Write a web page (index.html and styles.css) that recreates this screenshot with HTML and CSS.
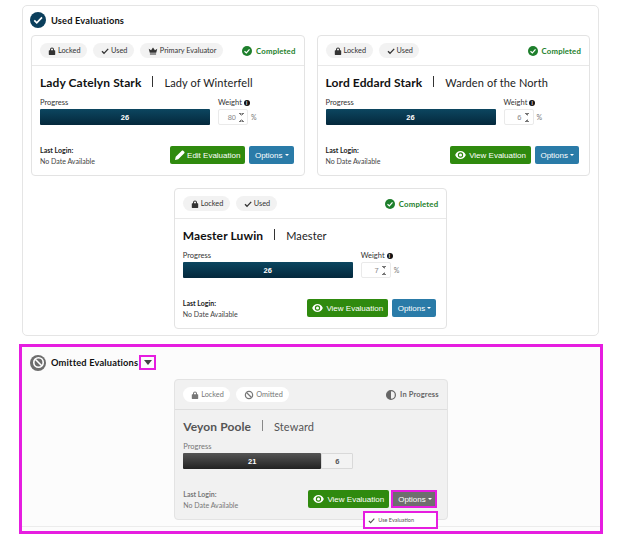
FILE: index.html
```html
<!DOCTYPE html>
<html lang="en">
<head>
<meta charset="utf-8">
<title>Evaluations</title>
<link rel="stylesheet" href="styles.css">
</head>
<body>
<svg class="defs" width="0" height="0" aria-hidden="true">
  <symbol id="lock" viewBox="0 0 12 12"><path d="M6 .6a3 3 0 0 0-3 3V5H2a.8.8 0 0 0-.8.8v5.4c0 .4.4.8.8.8h8c.4 0 .8-.4.8-.8V5.800A.8.8 0 0 0 10 5H9V3.600a3 3 0 0 0-3-3zM4.500 5V3.600a1.500 1.500 0 0 1 3 0V5z" fill-rule="evenodd"/></symbol>
  <symbol id="check" viewBox="0 0 12 12"><path d="M1.500 6.500 4.500 9.500 10.800 2.800" fill="none" stroke="currentColor" stroke-width="2"/></symbol>
  <symbol id="crown" viewBox="0 0 14 12"><path d="M2.500 8.500 1 3l3.300 2L7 1l2.700 4L13 3l-1.500 5.500zM2.700 9.500h8.600V11H2.700z"/></symbol>
  <symbol id="ok" viewBox="0 0 16 16"><circle cx="8" cy="8" r="8" fill="currentColor"/><path d="M4 8.300 7 11l5-5.500" fill="none" stroke="#fff" stroke-width="2"/></symbol>
  <symbol id="ban" viewBox="0 0 16 16"><circle cx="8" cy="8" r="5.800" fill="none" stroke="currentColor" stroke-width="2"/><path d="M4 4l8 8" stroke="currentColor" stroke-width="2"/></symbol>
  <symbol id="eye" viewBox="0 0 16 12"><path d="M8 0C4.500 0 1.600 2.300 0 6c1.600 3.700 4.500 6 8 6s6.400-2.300 8-6c-1.600-3.700-4.500-6-8-6zm0 10a4 4 0 1 1 0-8 4 4 0 0 1 0 8z" fill-rule="evenodd"/><circle cx="8" cy="6" r="2.300"/></symbol>
  <symbol id="pencil" viewBox="0 0 14 14"><path d="M0 14l1-4.500L9.500 1c.6-.6 1.500-.6 2 0L13 2.500c.6.6.6 1.400 0 2L4.500 13z"/></symbol>
</svg>

<section class="panel used">
  <header class="panel-head">
    <span class="round round-navy"><svg class="ico-10"><use href="#check"/></svg></span>
    <h2 class="panel-title">Used Evaluations</h2>
  </header>
  <div class="cards">
    <article class="card">
      <div class="card-head">
        <span class="pill"><svg class="ico-8"><use href="#lock"/></svg>Locked</span>
        <span class="pill"><svg class="ico-8"><use href="#check"/></svg>Used</span>
        <span class="pill"><svg class="ico-10"><use href="#crown"/></svg>Primary Evaluator</span>
        <span class="status done"><svg class="ico-10"><use href="#ok"/></svg>Completed</span>
      </div>
      <div class="card-body">
        <div class="who"><strong>Lady Catelyn Stark</strong><i class="sep"></i><span class="role">Lady of Winterfell</span></div>
        <div class="metrics">
          <div class="progress-col"><div class="label">Progress</div><div class="bar"><div class="fill">26</div></div></div>
          <div class="weight-col"><div class="label">Weight <b class="info">i</b></div><div class="weight"><span class="spin">80<em class="arrows"></em></span><small>%</small></div></div>
        </div>
        <div class="foot">
          <div class="login"><b>Last Login:</b><span>No Date Available</span></div>
          <div class="actions"><a class="btn green"><svg class="ico-10"><use href="#pencil"/></svg>Edit Evaluation</a><a class="btn blue">Options<i class="caret"></i></a></div>
        </div>
      </div>
    </article>
    <article class="card">
      <div class="card-head">
        <span class="pill"><svg class="ico-8"><use href="#lock"/></svg>Locked</span>
        <span class="pill"><svg class="ico-8"><use href="#check"/></svg>Used</span>
        <span class="status done"><svg class="ico-10"><use href="#ok"/></svg>Completed</span>
      </div>
      <div class="card-body">
        <div class="who"><strong>Lord Eddard Stark</strong><i class="sep"></i><span class="role">Warden of the North</span></div>
        <div class="metrics">
          <div class="progress-col"><div class="label">Progress</div><div class="bar"><div class="fill">26</div></div></div>
          <div class="weight-col"><div class="label">Weight <b class="info">i</b></div><div class="weight"><span class="spin">6<em class="arrows"></em></span><small>%</small></div></div>
        </div>
        <div class="foot">
          <div class="login"><b>Last Login:</b><span>No Date Available</span></div>
          <div class="actions"><a class="btn green"><svg class="ico-eye"><use href="#eye"/></svg>View Evaluation</a><a class="btn blue">Options<i class="caret"></i></a></div>
        </div>
      </div>
    </article>
    <article class="card">
      <div class="card-head">
        <span class="pill"><svg class="ico-8"><use href="#lock"/></svg>Locked</span>
        <span class="pill"><svg class="ico-8"><use href="#check"/></svg>Used</span>
        <span class="status done"><svg class="ico-10"><use href="#ok"/></svg>Completed</span>
      </div>
      <div class="card-body">
        <div class="who"><strong>Maester Luwin</strong><i class="sep"></i><span class="role">Maester</span></div>
        <div class="metrics">
          <div class="progress-col"><div class="label">Progress</div><div class="bar"><div class="fill">26</div></div></div>
          <div class="weight-col"><div class="label">Weight <b class="info">i</b></div><div class="weight"><span class="spin">7<em class="arrows"></em></span><small>%</small></div></div>
        </div>
        <div class="foot">
          <div class="login"><b>Last Login:</b><span>No Date Available</span></div>
          <div class="actions"><a class="btn green"><svg class="ico-eye"><use href="#eye"/></svg>View Evaluation</a><a class="btn blue">Options<i class="caret"></i></a></div>
        </div>
      </div>
    </article>
  </div>
</section>

<section class="omitted-mark">
  <div class="omitted">
    <header class="panel-head omitted-head">
      <span class="round round-grey"><svg class="ico-12"><use href="#ban"/></svg></span>
      <h2 class="panel-title">Omitted Evaluations</h2>
      <span class="toggle"><i class="toggle-arrow"></i></span>
    </header>
    <div class="cards">
      <article class="card card-omit">
        <div class="card-head">
          <span class="pill"><svg class="ico-8"><use href="#lock"/></svg>Locked</span>
          <span class="pill"><svg class="ico-10"><use href="#ban"/></svg>Omitted</span>
          <span class="status prog"><svg class="ico-10" viewBox="0 0 16 16"><circle cx="8" cy="8" r="7" fill="none" stroke="currentColor" stroke-width="2"/><path d="M8 1a7 7 0 0 0 0 14z" fill="currentColor"/></svg>In Progress</span>
        </div>
        <div class="card-body">
          <div class="who"><strong>Veyon Poole</strong><i class="sep"></i><span class="role">Steward</span></div>
          <div class="metrics">
            <div class="progress-col"><div class="label">Progress</div><div class="bar"><div class="fill grey">21</div><div class="rest">6</div></div></div>
          </div>
          <div class="foot">
            <div class="login"><b>Last Login:</b><span>No Date Available</span></div>
            <div class="actions"><a class="btn green"><svg class="ico-eye"><use href="#eye"/></svg>View Evaluation</a><a class="btn grey-btn">Options<i class="caret"></i></a></div>
          </div>
        </div>
        <div class="menu"><svg class="ico-7"><use href="#check"/></svg>Use Evaluation</div>
      </article>
    </div>
  </div>
</section>
</body>
</html>
```
FILE: styles.css
```css
* { box-sizing: border-box; }
html, body { margin: 0; padding: 0; }
body {
  width: 624px;
  height: 540px;
  overflow: hidden;
  background: #fff;
  font-family: "Lato", "Liberation Sans", sans-serif;
  color: #111;
  padding-top: 5px;
}
.defs { position: absolute; }
svg { fill: currentColor; flex: none; }
.ico-7 { width: 7px; height: 7px; }
.ico-8 { width: 8px; height: 8px; }
.ico-10 { width: 10px; height: 10px; }
.ico-12 { width: 13px; height: 13px; }
.ico-eye { width: 11px; height: 8px; margin-right: 1px; }

.panel {
  width: 577px;
  height: 331px;
  margin-left: 22px;
  border: 1px solid #e5e5e5;
  border-radius: 5px;
}
.panel-head {
  display: flex;
  align-items: center;
  height: 29px;
  padding: 0 0 1px 7px;
}
.panel-title {
  margin: 0 0 0 5px;
  font-size: 9.300px;
  font-weight: 700;
  letter-spacing: .15px;
}
.round {
  width: 16px;
  height: 16px;
  border-radius: 50%;
  display: flex;
  align-items: center;
  justify-content: center;
  color: #fff;
  flex: none;
}
.round-navy { background: #0b3f5c; }
.round-grey { background: #6d6d6d; }
.cards {
  display: flex;
  flex-wrap: wrap;
  justify-content: center;
  gap: 12px;
}
.card {
  position: relative;
  width: 273.500px;
  height: 141px;
  background: #fff;
  border: 1px solid #e3e3e3;
  border-radius: 4px;
}
.card-head {
  display: flex;
  align-items: center;
  gap: 6px;
  height: 30px;
  padding: 0 8px;
  border-bottom: 1px solid #e8e8e8;
}
.pill {
  display: inline-flex;
  align-items: center;
  gap: 2px;
  height: 15px;
  padding: 0 6.500px 0 8px;
  border-radius: 8px;
  background: #f2f2f2;
  font-size: 7.300px;
  color: #333;
  white-space: nowrap;
}
.status {
  margin-left: auto;
  display: inline-flex;
  align-items: center;
  gap: 4px;
  font-size: 7.800px;
  font-weight: 700;
  letter-spacing: .15px;
  white-space: nowrap;
}
.done { color: #1e7f2c; }
.prog { color: #666; font-size: 7.500px; }
.card-body { padding: 7px 8px 0 8px; }
.who {
  display: flex;
  align-items: center;
  height: 19px;
  font-size: 12px;
  letter-spacing: .1px;
  color: #222;
}
.who strong { font-weight: 700; color: #111; }
.role { font-size: 11px; }
.sep {
  width: 1px;
  height: 11px;
  background: #333;
  margin: -3px 11px 0 11px;
}
.metrics { display: flex; margin-top: 6px; height: 27px; }
.label { font-size: 7.500px; line-height: 9px; color: #333; margin-bottom: 2px; }
.progress-col { width: 170px; }
.bar {
  display: flex;
  height: 16px;
  font-family: "Liberation Sans", sans-serif;
  font-size: 7.500px;
  font-weight: 700;
}
.fill {
  flex: 1;
  display: flex;
  align-items: center;
  justify-content: center;
  color: #fff;
  background: linear-gradient(#0c4660, #04283c);
  border-radius: 1px;
}
.fill.grey { background: linear-gradient(#555, #222); }
.rest {
  width: 32px;
  display: flex;
  align-items: center;
  justify-content: center;
  color: #555;
  background: #f3f3f3;
  border: 1px solid #d9d9d9;
  border-radius: 0 1px 1px 0;
}
.weight-col { margin-left: 8px; }
.weight { display: flex; align-items: center; gap: 3px; }
.spin {
  width: 30px;
  height: 16px;
  border: 1px solid #eaeaea;
  border-radius: 2px;
  font-size: 7.500px;
  color: #888;
  display: flex;
  align-items: center;
  justify-content: flex-end;
  padding-right: 3px;
  gap: 3px;
  font-family: "Liberation Sans", sans-serif;
}
.arrows {
  width: 5px;
  height: 9px;
  display: block;
  background:
    linear-gradient(45deg, transparent 50%, #777 50%) 0 0 / 2.500px 3px no-repeat,
    linear-gradient(-45deg, transparent 50%, #777 50%) 100% 0 / 2.500px 3px no-repeat,
    linear-gradient(135deg, transparent 50%, #777 50%) 0 100% / 2.500px 3px no-repeat,
    linear-gradient(-135deg, transparent 50%, #777 50%) 100% 100% / 2.500px 3px no-repeat;
}
.weight small { font-size: 7px; color: #777; }
.info {
  display: inline-block;
  width: 6px;
  height: 6px;
  border-radius: 50%;
  background: #111;
  color: #fff;
  font-size: 5px;
  line-height: 6px;
  text-align: center;
}
.foot {
  display: flex;
  justify-content: space-between;
  align-items: center;
  margin-top: 20px;
  padding-right: 2px;
}
.login { display: flex; flex-direction: column; font-size: 7px; line-height: 11px; color: #444; }
.login b { color: #222; }
.actions { display: flex; gap: 4px; margin-top: -2px; }
.btn {
  display: inline-flex;
  align-items: center;
  gap: 2px;
  height: 18px;
  padding: 0 5px 0 5.500px;
  border-radius: 2px;
  color: #fff;
  font-family: "Liberation Sans", sans-serif;
  font-size: 8px;
  white-space: nowrap;
}
.green { background: #2f8a0e; }
.blue { background: #2a7ba8; }
.grey-btn {
  background: #6e6e6e;
  border: 2px solid #e61de0;
  border-radius: 0;
  padding: 0 3px 0 5px;
  margin-left: -2px;
}
.caret {
  width: 0;
  height: 0;
  border: 2px solid transparent;
  border-top-color: #fff;
  border-bottom: 0;
}

.omitted-mark {
  width: 584px;
  height: 190px;
  margin: 8px 0 0 19px;
  border: 3px solid #e61de0;
  background: #fcfcfc;
}
.omitted { height: 180px; border-bottom: 1px solid #ececec; }
.omitted-head { height: 32px; padding: 0 0 1px 8px; }
.omitted-head .panel-title { margin-right: 1px; }
.toggle {
  width: 17px;
  height: 15px;
  border: 2px solid #e61de0;
  display: flex;
  align-items: center;
  justify-content: center;
}
.toggle-arrow {
  width: 0;
  height: 0;
  border: 4.500px solid transparent;
  border-top: 5px solid #444;
  border-bottom: 0;
}
.card-omit {
  background: #f1f1f1;
  color: #666;
}
.card-omit .card-head { border-bottom-color: #dedede; }
.card-omit .pill { background: #fff; color: #777; }
.card-omit .who, .card-omit .who strong { color: #555; }
.card-omit .label, .card-omit .login, .card-omit .login b { color: #777; }
.card-omit .sep { background: #888; }
.menu {
  position: absolute;
  left: 188px;
  top: 131px;
  width: 75px;
  height: 18px;
  display: flex;
  align-items: center;
  gap: 3px;
  padding-left: 3px;
  background: #fff;
  border: 2px solid #e61de0;
  font-size: 5.500px;
  color: #555;
}
```
